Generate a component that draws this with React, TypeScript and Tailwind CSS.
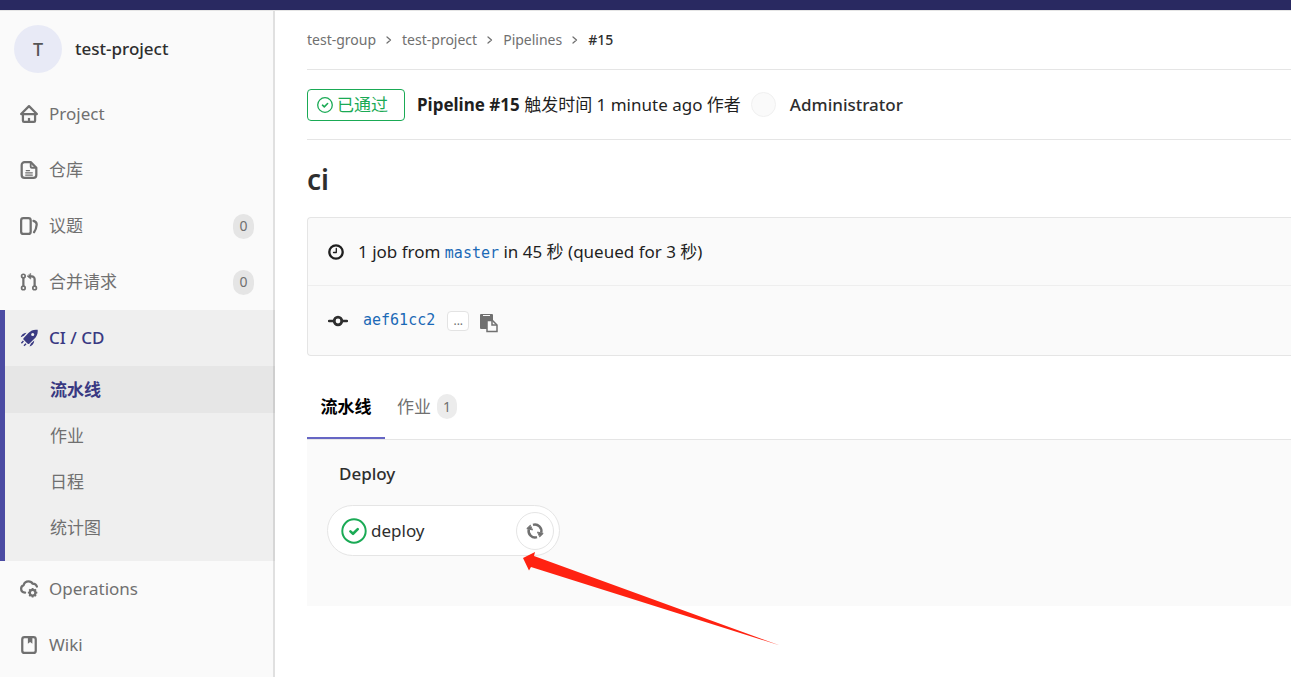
import type { ReactNode } from 'react';
import clsx from 'clsx';

function Icon({ children, className }: { children: ReactNode; className?: string }) {
  return (
    <svg
      viewBox="0 0 16 16"
      fill="none"
      stroke="currentColor"
      strokeWidth="2"
      strokeLinecap="round"
      strokeLinejoin="round"
      aria-hidden="true"
      className={clsx('shrink-0', className)}
    >
      {children}
    </svg>
  );
}

const icons = {
  home: (
    <>
      <path d="M1 8 8 1l7 7H1Z" />
      <path d="M2.600 8.500V14a1 1 0 0 0 1 1h8.800a1 1 0 0 0 1-1V8.500" />
      <path d="M8 11.500v3" strokeLinecap="butt" />
    </>
  ),
  doc: (
    <>
      <path d="M9.500 1H4a2.500 2.500 0 0 0-2.500 2.500v9A2.500 2.500 0 0 0 4 15h8a2.500 2.500 0 0 0 2.500-2.500V6L9.500 1Z" />
      <path d="M9.500 1.500V5a1 1 0 0 0 1 1h3.500" strokeWidth="1.600" />
      <path d="M5.500 8.500h3M5 10.500h6M5 12.500h6" strokeWidth="1" />
    </>
  ),
  issues: (
    <>
      <rect x="1" y="1" width="8.500" height="14" rx="2" />
      <path d="M12 3.500c2.300.8 3 2 2.800 3.500-.2 2.200-.7 4.500-2.300 6.500" />
    </>
  ),
  merge: (
    <>
      <circle cx="3" cy="2.700" r="1.600" strokeWidth="1.500" />
      <circle cx="3" cy="13.300" r="1.600" strokeWidth="1.500" />
      <circle cx="13" cy="13.300" r="1.600" strokeWidth="1.500" />
      <path d="M3 4.500v7M13 11.500v-6A2.500 2.500 0 0 0 10.500 3H9" strokeLinecap="butt" />
      <path d="M9.500.600v4.800L6.600 3Z" fill="currentColor" strokeWidth=".6" />
    </>
  ),
  rocket: (
    <g fill="currentColor" stroke="none">
      <path
        fillRule="evenodd"
        d="M15.700.700c.400 3.400-.900 6-3.200 8.200L8.200 13c-.6.500-1.100.400-1.600-.1L3.300 9.600c-.500-.500-.500-1 0-1.500l4.200-4.600C9.700 1.300 12.300.200 15.700.700ZM11.300 3.500a1.400 1.400 0 1 0 0 2.800 1.400 1.400 0 0 0 0-2.800Z"
      />
      <path d="M5.800 3.400 3.500 6 .7 7.400C1 5.600 3 3.500 5.800 3.400ZM12.700 10.300c-.2 2.800-2 4.800-4.200 5.300l1.200-2.800 3-2.500Z" />
      <path d="m2.600 10.300.9.900-1.800 1.900-.9-.9ZM4.900 12.600l.9.900-1.800 1.900-.9-.9Z" />
    </g>
  ),
  operations: (
    <>
      <path d="M4.500 11.200C2.500 11 1 9.500 1 7.700 1 6 2 4.900 3.300 4.500 3.800 2.400 5.500 1.200 7.500 1.200c1.600 0 3 .7 3.700 2 2 .1 3.400 1.200 3.800 2.600" />
      <circle cx="11.200" cy="11.300" r="2.500" />
      <path
        d="M11.200 7v1.500M11.200 14.100v1.500M7 11.300h1.500M13.900 11.300h1.500M8.200 8.300l1 1M13.200 13.300l1 1M14.200 8.300l-1 1M9.200 13.300l-1 1"
        strokeLinecap="butt"
        strokeWidth="1.600"
      />
    </>
  ),
  wiki: (
    <>
      <rect x="2" y="1" width="12" height="14" rx="2" />
      <path d="M7 1.500h4v5.300L9 5.300 7 6.800Z" fill="currentColor" stroke="none" />
    </>
  ),
};

interface NavItemProps {
  icon: keyof typeof icons;
  label: string;
  count?: number;
  active?: boolean;
}

function NavItem({ icon, label, count, active = false }: NavItemProps) {
  return (
    <a
      href="#"
      className={clsx(
        'flex h-14 items-center gap-[11px] pr-[21px]',
        active ? 'pl-[15px] font-medium text-[#393982]' : 'pl-5 text-[#707070]',
      )}
    >
      <Icon className="size-[18px]">{icons[icon]}</Icon>
      <span className="flex-1">{label}</span>
      {count !== undefined && (
        <span className="flex h-[25px] w-[21px] items-center justify-center rounded-full bg-[#e5e5e5] text-sm">
          {count}
        </span>
      )}
    </a>
  );
}

function Sidebar() {
  const subItems = ['作业', '日程', '统计图'];

  return (
    <nav className="relative w-[275px] shrink-0 bg-[#fafafa] after:absolute after:inset-y-0 after:right-0 after:w-[2px] after:bg-black/10">
      <a href="#" className="flex h-[75px] items-center gap-[13px] pl-3.5 font-medium text-[#2e2e2e]">
        <span className="flex size-12 items-center justify-center rounded-full bg-[#e8eaf6] text-lg font-medium text-[#555]">
          T
        </span>
        test-project
      </a>
      <NavItem icon="home" label="Project" />
      <NavItem icon="doc" label="仓库" />
      <NavItem icon="issues" label="议题" count={0} />
      <NavItem icon="merge" label="合并请求" count={0} />
      <div className="border-l-[5px] border-[#4b4ba3] bg-[#efefef] pb-2.5">
        <NavItem icon="rocket" label="CI / CD" active />
        <a href="#" className="flex h-[47px] items-center bg-[#e6e6e6] pl-[45px] font-bold text-[#393982]">
          流水线
        </a>
        {subItems.map((item) => (
          <a key={item} href="#" className="flex h-[46px] items-center pl-[45px] text-[#707070]">
            {item}
          </a>
        ))}
      </div>
      <NavItem icon="operations" label="Operations" />
      <NavItem icon="wiki" label="Wiki" />
    </nav>
  );
}

function Breadcrumbs() {
  const links = ['test-group', 'test-project', 'Pipelines'];

  return (
    <div className="flex h-[59px] items-center gap-[9px] border-b border-[#e5e5e5] text-sm text-[#707070]">
      {links.map((link) => (
        <div key={link} className="flex items-center gap-[9px]">
          <a href="#">{link}</a>
          <Icon className="size-2">
            <path d="m4 2 7 6-7 6" strokeWidth="2.500" />
          </Icon>
        </div>
      ))}
      <a href="#" className="font-medium text-[#2e2e2e]">#15</a>
    </div>
  );
}

function StatusHeader() {
  return (
    <header className="flex h-[70px] items-center border-b border-[#e5e5e5]">
      <a
        href="#"
        className="mr-3 flex h-8 w-[98px] items-center gap-1 rounded border border-[#1aaa55] pl-[9px] text-[#1aaa55]"
      >
        <Icon className="size-4">
          <circle cx="8" cy="8" r="7.300" strokeWidth="1.300" />
          <path d="m5.500 8.200 1.800 1.700 3.300-3.400" strokeWidth="1.600" />
        </Icon>
        已通过
      </a>
      <p>
        <strong>Pipeline #15</strong> 触发时间 1 minute ago 作者
      </p>
      <span className="mr-3.5 ml-2.5 size-[25px] rounded-full border border-[#f0f0f0] bg-[#fafafa]" />
      <a href="#" className="font-medium text-[#2e2e2e]">Administrator</a>
    </header>
  );
}

function InfoWell() {
  return (
    <div className="rounded-l border border-r-0 border-[#e5e5e5] bg-[#fafafa]">
      <div className="flex h-[68px] items-center gap-3.5 border-b border-[#eee] pl-5">
        <Icon className="size-4">
          <circle cx="8" cy="8" r="6.700" strokeWidth="2.300" />
          <path d="M8.300 4.500v4H5.500" strokeWidth="1.300" />
        </Icon>
        <p>
          1 job from{' '}
          <a href="#" className="font-['DejaVu_Sans_Mono',monospace] text-[15px] text-[#1b69b6]">master</a>
          {' '}in 45 秒 (queued for 3 秒)
        </p>
      </div>
      <div className="flex h-[69px] items-center pl-5">
        <svg viewBox="0 0 20 12" className="mr-[15px] h-3 w-5" fill="none" stroke="#2e2e2e" aria-hidden="true">
          <path d="M1 6h5M14 6h5" strokeWidth="2.400" strokeLinecap="round" />
          <circle cx="10" cy="6" r="3.800" strokeWidth="2.800" />
        </svg>
        <a href="#" className="font-['DejaVu_Sans_Mono',monospace] text-[15px] text-[#1b69b6]">aef61cc2</a>
        <button
          type="button"
          aria-label="Toggle commit description"
          className="mr-2.5 ml-3 flex h-5 w-[22px] items-center justify-center rounded border border-[#e3e3e3] bg-white text-xs text-[#707070]"
        >
          ...
        </button>
        <button type="button" aria-label="Copy commit SHA" className="mt-1">
          <svg viewBox="0 0 20 20" className="size-5" aria-hidden="true">
            <path d="M1 2a1 1 0 0 1 1-1h11a1 1 0 0 1 1 1v5H8v9H2a1 1 0 0 1-1-1Z" fill="#707070" />
            <path d="M4 2.500h7" stroke="#fafafa" />
            <path d="M8 7.500h5.500L18 12v6.500H8Z" fill="#fafafa" stroke="#707070" strokeWidth="1.500" />
            <path d="M13 7.500V12h5" fill="none" stroke="#707070" strokeWidth="1.500" />
          </svg>
        </button>
      </div>
    </div>
  );
}

function Tabs() {
  return (
    <div className="mt-5 flex h-16 border-b border-[#e5e5e5]">
      <a href="#" className="flex w-[78px] items-center justify-center border-b-2 border-[#6666c4] font-bold text-black">
        流水线
      </a>
      <a href="#" className="flex items-center gap-1.5 border-b-2 border-transparent pl-3 text-[#707070]">
        作业
        <span className="flex h-[25px] w-5 items-center justify-center rounded-full bg-[#ececec] text-sm">1</span>
      </a>
    </div>
  );
}

function PipelineGraph() {
  return (
    <section className="h-[166px] bg-[#fafafa] pt-5 pl-5">
      <h2 className="mb-[17px] pl-3 leading-7 font-medium text-[#2e2e2e]">Deploy</h2>
      <div className="relative flex h-[51px] w-[233px] items-center justify-between rounded-full border border-[#e5e5e5] bg-white pr-[5px] pl-[13px]">
        <a href="#" className="flex items-center gap-1 text-[#2e2e2e]">
          <Icon className="size-[26px] text-[#1aaa55]">
            <circle cx="8" cy="8" r="7.200" strokeWidth="1.200" />
            <path d="m5.800 8.200 1.600 1.500 2.900-2.900" strokeWidth="1.600" />
          </Icon>
          deploy
        </a>
        <button
          type="button"
          aria-label="Retry"
          className="flex size-[38px] items-center justify-center rounded-full border border-[#e5e5e5] text-[#707070]"
        >
          <Icon className="size-[18px]">
            <g strokeLinecap="butt" strokeWidth="2.200">
              <path d="M6.200 2.500A5.800 5.800 0 0 1 13.500 9.500" />
              <path d="M9.800 13.500A5.800 5.800 0 0 1 2.500 6.500" />
            </g>
            <g fill="currentColor" strokeWidth=".8">
              <path d="m10.500 9 4.800 1.200-2.900 2.800Z" />
              <path d="M5.500 7 .7 5.800 3.600 3Z" />
            </g>
          </Icon>
        </button>
        <svg
          viewBox="0 0 257 94"
          className="pointer-events-none absolute top-[46px] left-[195px] h-[94px] w-[257px]"
          aria-hidden="true"
        >
          <path d="M0 6 12 0l-1 4 246 89.500L8 15l-2 3.500Z" fill="#ff2211" />
        </svg>
      </div>
    </section>
  );
}

export default function App() {
  return (
    <div className="flex min-h-screen flex-col bg-white font-['Noto_Sans','Noto_Sans_CJK_SC',sans-serif] text-[17px] text-[#1f1f1f]">
      <div className="h-[11px] border-b border-[#e5e5e5] bg-[#292961]" />
      <div className="flex flex-1">
        <Sidebar />
        <main className="min-w-0 flex-1 pl-8">
          <Breadcrumbs />
          <StatusHeader />
          <h1 className="flex h-[77px] items-center text-[28px] font-semibold text-[#2e2e2e]">ci</h1>
          <InfoWell />
          <Tabs />
          <PipelineGraph />
        </main>
      </div>
    </div>
  );
}
